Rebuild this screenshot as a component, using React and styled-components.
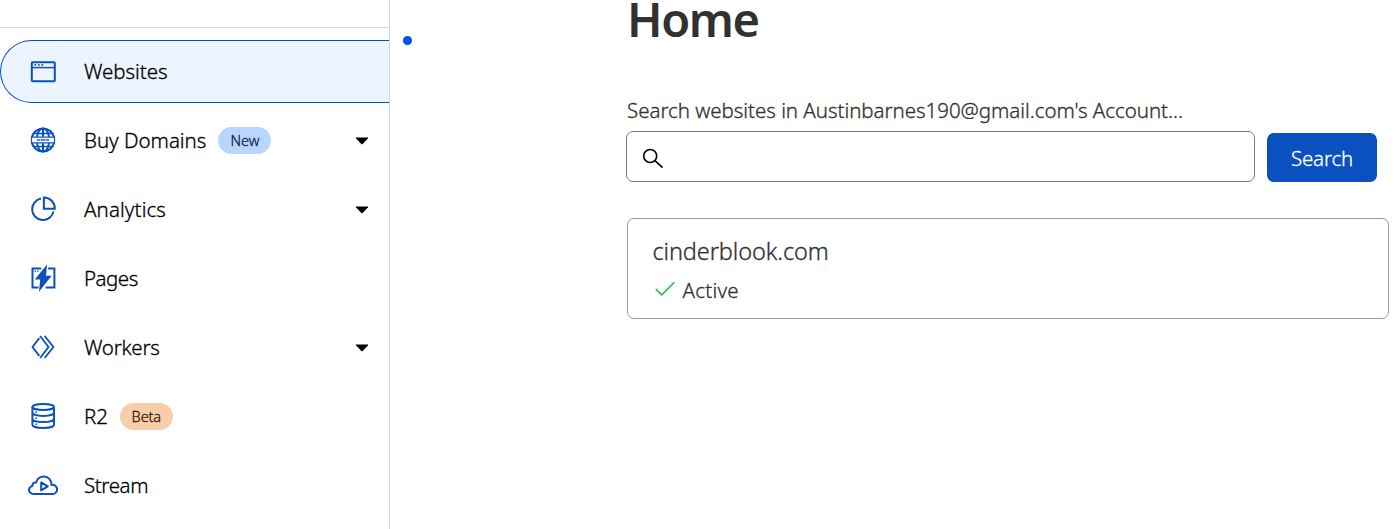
import React from 'react';
import styled, { createGlobalStyle } from 'styled-components';

const GlobalStyle = createGlobalStyle`
  * { box-sizing: border-box; }
  body {
    margin: 0;
    background: #fff;
    color: #313131;
    font-family: 'Segoe UI', 'Noto Sans', 'Open Sans', sans-serif;
    font-weight: 300;
    -webkit-text-stroke: 0.3px currentColor;
    overflow: hidden;
  }
`;

const Page = styled.div`
  display: flex;
  height: 529px;
  overflow: hidden;
`;

const Sidebar = styled.aside`
  width: 390px;
  flex: none;
  border-right: 1px solid #d5d7d8;
`;

const SidebarHeader = styled.div`
  height: 28px;
  border-bottom: 1px solid #d9d9d9;
`;

const Nav = styled.nav`
  display: flex;
  flex-direction: column;
  gap: 6px;
  padding-top: 12px;
`;

const NavItem = styled.a`
  display: flex;
  align-items: center;
  height: 63px;
  padding: 0 20.5px 1px 27px;
  color: #000;
  border: 1px solid ${(p) => (p.$active ? '#0051c3' : 'transparent')};
  border-right: 0;
  border-radius: 32px 0 0 32px;
  background: ${(p) => (p.$active ? '#ecf4ff' : 'transparent')};
`;

const NavIcon = styled.svg`
  width: 30px;
  height: 30px;
  margin-right: 26px;
  flex: none;
  fill: none;
  stroke: #0a50bf;
  stroke-width: 2;
`;

const NavLabel = styled.span`
  font-size: 20.5px;
  line-height: 28px;
  white-space: nowrap;
  letter-spacing: ${(p) => p.$tracking || 0}px;
`;

const Badge = styled.span`
  display: flex;
  align-items: center;
  justify-content: center;
  width: 53px;
  height: 27px;
  margin-left: 12px;
  padding-bottom: 1px;
  border-radius: 14px;
  font-size: 14.5px;
  letter-spacing: -0.1px;
  color: ${(p) => (p.$tone === 'orange' ? '#341a04' : '#0c2449')};
  background: ${(p) => (p.$tone === 'orange' ? '#f8cda9' : '#b9d6ff')};
`;

const Caret = styled.svg`
  width: 14px;
  height: 8px;
  margin: 1px 0 0 auto;
  fill: #000;
`;

const Gutter = styled.div`
  width: 236px;
  flex: none;
  padding: 36px 0 0 12.5px;
`;

const Dot = styled.div`
  width: 9px;
  height: 9px;
  border-radius: 50%;
  background: #0051ee;
`;

const Main = styled.main`
  width: 763px;
  flex: none;
`;

const Title = styled.h1`
  margin: 0 0 0 1px;
  font-size: 47px;
  line-height: 38px;
  font-weight: 600;
  -webkit-text-stroke: 0;
  letter-spacing: ${(p) => p.$tracking || 0}px;
`;

const SearchLabel = styled.label`
  display: block;
  margin: 58px 0 0 1px;
  height: 35px;
  font-size: 20.5px;
  line-height: 28px;
  white-space: nowrap;
  letter-spacing: ${(p) => p.$tracking || 0}px;
`;

const SearchRow = styled.form`
  display: flex;
  align-items: flex-end;
  gap: 12px;
`;

const SearchField = styled.div`
  display: flex;
  align-items: center;
  width: 629px;
  height: 51px;
  padding: 4px 0 0 15px;
  border: 1px solid #797979;
  border-radius: 7px;
`;

const SearchIcon = styled.svg`
  width: 22px;
  height: 22px;
  fill: none;
  stroke: #000;
  stroke-width: 1.6;
`;

const SearchButton = styled.button`
  width: 110px;
  height: 49px;
  padding: 0;
  border: 0;
  border-radius: 7px;
  background: #0a50bf;
  color: #fff;
  font-family: inherit;
  font-weight: inherit;
  font-size: 20.5px;
  letter-spacing: ${(p) => p.$tracking || 0}px;
`;

const SiteCard = styled.section`
  width: 762px;
  height: 101px;
  margin: 36px 0 0 1px;
  padding: 16px 24.5px;
  border: 1px solid #999;
  border-radius: 7px;
`;

const SiteName = styled.div`
  font-size: 23.5px;
  line-height: 32px;
  letter-spacing: ${(p) => p.$tracking || 0}px;
`;

const SiteStatus = styled.div`
  display: flex;
  align-items: center;
  gap: 8px;
  margin-top: 9px;
  font-size: 20.5px;
  line-height: 28px;
  letter-spacing: ${(p) => p.$tracking || 0}px;
`;

const Check = styled.svg`
  width: 20px;
  height: 16px;
  margin: -2px 0 0 2px;
  fill: none;
  stroke: #2db35e;
  stroke-width: 1.6;
`;

const icons = {
  browser: (
    <>
      <rect x="3.8" y="6.2" width="23" height="19" rx="0.8" />
      <path d="M4 11.6h23" strokeWidth="1.5" />
      <path d="M6.4 8.8h1.6M10 8.8h1.6M13.5 8.8h1.6" strokeWidth="1.7" />
    </>
  ),
  globe: (
    <>
      <path d="M3.9 12A11.5 11.5 0 0 1 26.1 12M3.9 18A11.5 11.5 0 0 0 26.1 18M15 3.5v8.3M15 18.200v8.300" />
      <path d="M9 12C9.800 7.200 12.200 3.500 15 3.500s5.200 3.700 6 8.500M9 18c.8 4.800 3.200 8.500 6 8.500s5.200-3.700 6-8.500" strokeWidth="1.800" />
      <path d="M6 8.500h18M6 21.500h18" strokeWidth="1.300" />
      <path d="M3.500 12.100h23v5.800h-23z" strokeWidth="1.200" fill="#fff" />
      <path d="M9 14l.8 2 .9-1.900.9 1.900.8-2M13.300 14l.8 2 .9-1.900.9 1.900.8-2M17.600 14l.8 2 .9-1.900.9 1.900.8-2" strokeWidth="0.800" />
    </>
  ),
  pie: (
    <>
      <path d="M13 4.600A10.800 10.800 0 1 0 25.500 17.400" />
      <path d="M15.900 3.400v11.400h10.900A11 11 0 0 0 15.900 3.400z" />
    </>
  ),
  bolt: (
    <>
      <path d="M13.300 5.600H4.500v18.800h6M20 5.600h6.400v18.800h-8.800" />
      <path d="M6.400 8.200h1.400M9 8.200h1.400" strokeWidth="1.300" />
      <path d="M19 1.500L6.800 16.600h5.400L11 28.800 23.600 12.700h-5.600z" fill="#0a50bf" stroke="none" />
    </>
  ),
  workers: (
    <path d="M11.300 6.100L4.500 15l6.800 8.900M12.100 4l8.400 11-8.400 11M16.700 4l8.700 11-8.700 11" strokeWidth="1.800" />
  ),
  database: (
    <>
      <ellipse cx="15.200" cy="5.900" rx="10.800" ry="3" />
      <path d="M4.400 6v17.800c0 1.800 4.800 3.200 10.800 3.200S26 25.600 26 23.800V6M4.400 11.800c0 1.800 4.800 3.100 10.800 3.100S26 13.600 26 11.800M4.400 17.900c0 1.800 4.800 3.100 10.800 3.100S26 19.700 26 17.900" />
      <path d="M7.500 11.200h1.500M7.500 17.300h1.500M7.500 23.200h1.500" strokeWidth="1.500" />
    </>
  ),
  cloud: (
    <>
      <path d="M7.200 24.100h16.300c3.300 0 5.600-1.900 5.600-4.700 0-2.900-2.300-4.900-5.500-4.500C23.500 10 20.100 6.600 16 6.600c-3.800 0-6.700 2.200-7.900 5.900-2.400-.3-3.900 1.200-3.700 3.400C2.300 16.600 1 18.100 1 20c0 2.400 2.400 4.100 6.200 4.100z" />
      <path d="M13.200 12.400v8l6.600-4z" strokeLinejoin="round" />
    </>
  ),
};

const navItems = [
  { label: 'Websites', icon: 'browser', active: true, tracking: -0.05 },
  { label: 'Buy Domains', icon: 'globe', badge: 'New', tone: 'blue', caret: true, tracking: -0.03 },
  { label: 'Analytics', icon: 'pie', caret: true, tracking: 0.1 },
  { label: 'Pages', icon: 'bolt', tracking: -0.5 },
  { label: 'Workers', icon: 'workers', caret: true, tracking: -0.25 },
  { label: 'R2', icon: 'database', badge: 'Beta', tone: 'orange', tracking: -0.1 },
  { label: 'Stream', icon: 'cloud', tracking: -0.4 },
];

export default function App() {
  return (
    <Page>
      <GlobalStyle />
      <Sidebar>
        <SidebarHeader />
        <Nav>
          {navItems.map((item) => (
            <NavItem key={item.label} $active={item.active}>
              <NavIcon viewBox="0 0 30 30">{icons[item.icon]}</NavIcon>
              <NavLabel $tracking={item.tracking}>{item.label}</NavLabel>
              {item.badge && <Badge $tone={item.tone}>{item.badge}</Badge>}
              {item.caret && (
                <Caret viewBox="0 0 14 8">
                  <path d="M1.2 0.5h11.6q.9 0 .3.7L7.7 6.9q-.7.7-1.4 0L.9 1.2Q.3.5 1.2.5z" />
                </Caret>
              )}
            </NavItem>
          ))}
        </Nav>
      </Sidebar>
      <Gutter>
        <Dot />
      </Gutter>
      <Main>
        <Title $tracking={-1.4}>Home</Title>
        <SearchLabel $tracking={-0.04}>Search websites in Austinbarnes190@gmail.com's Account...</SearchLabel>
        <SearchRow>
          <SearchField>
            <SearchIcon viewBox="0 0 22 22">
              <circle cx="8.2" cy="8" r="6.5" />
              <path d="M12.9 12.7l7.7 6.9" />
            </SearchIcon>
          </SearchField>
          <SearchButton type="button" $tracking={-0.2}>Search</SearchButton>
        </SearchRow>
        <SiteCard>
          <SiteName $tracking={-0.1}>cinderblook.com</SiteName>
          <SiteStatus $tracking={0.25}>
            <Check viewBox="0 0 20 16">
              <path d="M.8 8.2l6 5.7L19.3 1.3" />
            </Check>
            Active
          </SiteStatus>
        </SiteCard>
      </Main>
    </Page>
  );
}
